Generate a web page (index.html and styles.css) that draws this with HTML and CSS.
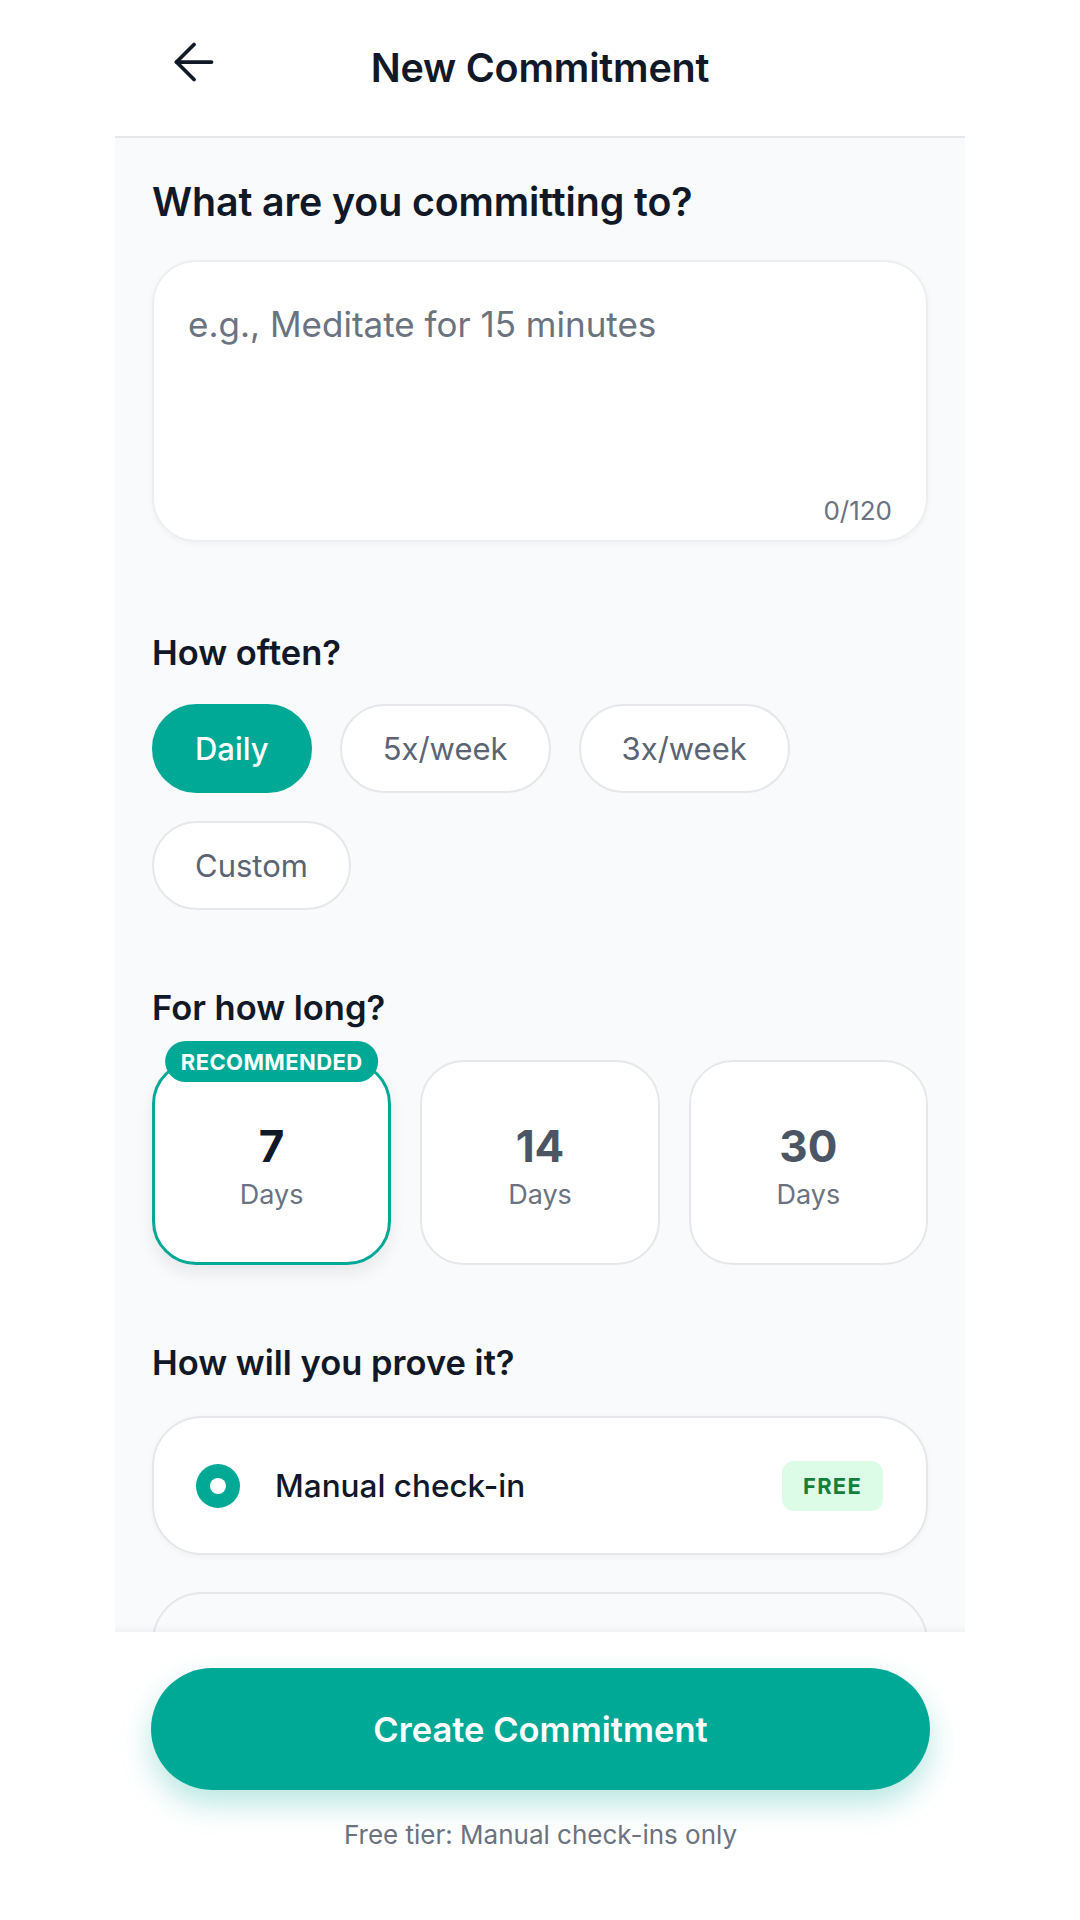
FILE: index.html
```html
<!DOCTYPE html>
<html lang="en">
<head>
<meta charset="utf-8">
<title>New Commitment</title>
<link rel="stylesheet" href="styles.css">
</head>
<body>
<div class="app">
  <header class="topbar">
    <button class="back" aria-label="Back">
      <svg viewBox="4 4 16 16" width="40" height="40" fill="none" stroke="currentColor" stroke-width="1.5" stroke-linecap="round" stroke-linejoin="round"><path d="M12 19l-7-7 7-7"/><path d="M19 12H5"/></svg>
    </button>
    <h1 class="title">New Commitment</h1>
  </header>

  <main class="content">
    <h2 class="q-main">What are you committing to?</h2>
    <div class="textarea">
      <span class="placeholder">e.g., Meditate for 15 minutes</span>
      <span class="counter">0/120</span>
    </div>

    <h3 class="q q-often">How often?</h3>
    <div class="chips">
      <span class="chip active">Daily</span>
      <span class="chip">5x/week</span>
      <span class="chip">3x/week</span>
      <span class="chip">Custom</span>
    </div>

    <h3 class="q q-long">For how long?</h3>
    <div class="durations">
      <div class="dur selected">
        <span class="badge">RECOMMENDED</span>
        <span class="num">7</span>
        <span class="unit">Days</span>
      </div>
      <div class="dur">
        <span class="num">14</span>
        <span class="unit">Days</span>
      </div>
      <div class="dur">
        <span class="num">30</span>
        <span class="unit">Days</span>
      </div>
    </div>

    <h3 class="q q-prove">How will you prove it?</h3>
    <div class="options">
      <div class="option">
        <span class="radio"></span>
        <span class="opt-label">Manual check-in</span>
        <span class="free">FREE</span>
      </div>
      <div class="option muted"></div>
    </div>
  </main>

  <footer class="footer">
    <button class="cta">Create Commitment</button>
    <p class="note">Free tier: Manual check-ins only</p>
  </footer>
</div>
</body>
</html>
```

FILE: styles.css
```css
* { box-sizing: border-box; }
html, body { margin: 0; padding: 0; background: #ffffff; }
body { font-family: Inter, "Noto Sans", sans-serif; color: #111827; }

.app {
  width: 850px;
  height: 1920px;
  margin: 0 auto;
  display: flex;
  flex-direction: column;
}

.topbar {
  height: 138px;
  flex: none;
  background: #fff;
  border-bottom: 2px solid #e5e7eb;
  display: flex;
  align-items: center;
  position: relative;
  padding-left: 59px;
}
.back {
  border: 0;
  background: none;
  padding: 0;
  width: 40px;
  height: 40px;
  color: #111827;
  display: flex;
  margin-top: -12px;
}
.title {
  position: absolute;
  left: 0;
  right: 0;
  top: 0;
  bottom: 0;
  margin: 0;
  display: flex;
  align-items: center;
  justify-content: center;
  font-size: 39.5px;
  font-weight: 600;
  letter-spacing: -0.2px;
  pointer-events: none;
}

.content {
  flex: 1;
  overflow: hidden;
  background: #f9fafb;
  padding: 40px 37px 0;
}

.q-main {
  margin: 0;
  font-size: 39.3px;
  line-height: 48px;
  font-weight: 600;
  letter-spacing: -0.1px;
}

.textarea {
  margin-top: 34px;
  height: 282px;
  background: #fff;
  border: 2px solid #eceef1;
  border-radius: 44px;
  box-shadow: 0 2px 6px rgba(17, 24, 39, 0.04);
  position: relative;
  padding: 42px 34px;
}
.placeholder {
  font-size: 35px;
  color: #6b7280;
  line-height: 40px;
}
.counter {
  position: absolute;
  right: 34px;
  bottom: 14px;
  font-size: 26px;
  color: #6b7280;
}

.q {
  margin: 0;
  font-size: 34.5px;
  line-height: 44px;
  font-weight: 600;
}
.q-often { margin-top: 89px; }

.chips {
  margin-top: 29px;
  display: flex;
  flex-wrap: wrap;
  gap: 28px;
  width: 700px;
}
.chip {
  height: 89px;
  padding: 0 41px;
  border-radius: 45px;
  background: #fff;
  border: 2px solid #e5e7eb;
  display: flex;
  align-items: center;
  font-size: 31px;
  color: #5b6472;
}
.chip.active {
  background: #00a896;
  border-color: #00a896;
  color: #fff;
  font-weight: 500;
}

.q-long { margin-top: 76px; }

.durations {
  margin-top: 30px;
  display: grid;
  grid-template-columns: repeat(3, 1fr);
  gap: 29px;
}
.dur {
  position: relative;
  height: 205px;
  background: #fff;
  border: 2px solid #e5e7eb;
  border-radius: 44px;
  display: flex;
  flex-direction: column;
  align-items: center;
  justify-content: center;
  padding-top: 6px;
}
.dur.selected {
  border: 3px solid #00a896;
  box-shadow: 0 8px 16px rgba(17, 24, 39, 0.08);
}
.badge {
  position: absolute;
  top: -22px;
  left: 50%;
  transform: translateX(-50%);
  height: 41px;
  padding: 0 16px;
  border-radius: 21px;
  background: #00a896;
  color: #fff;
  font-size: 22px;
  font-weight: 700;
  letter-spacing: 0.4px;
  display: flex;
  align-items: center;
  white-space: nowrap;
}
.num {
  font-size: 44px;
  line-height: 50px;
  font-weight: 700;
  color: #4b5563;
}
.dur.selected .num { color: #111827; }
.unit {
  font-size: 27px;
  line-height: 32px;
  color: #6b7280;
  margin-top: 8px;
}

.q-prove { margin-top: 76px; }

.options {
  margin-top: 31px;
  display: flex;
  flex-direction: column;
  gap: 37px;
}
.option {
  height: 139px;
  flex: none;
  background: #fff;
  border: 2px solid #e5e7eb;
  border-radius: 50px;
  display: flex;
  align-items: center;
  padding: 0 43px 0 42px;
  box-shadow: 0 2px 6px rgba(17, 24, 39, 0.04);
}
.option.muted {
  background: #f9fafb;
  box-shadow: none;
}
.radio {
  width: 44px;
  height: 44px;
  border-radius: 50%;
  background: #00a896;
  display: flex;
  align-items: center;
  justify-content: center;
  flex: none;
}
.radio::after {
  content: "";
  width: 16px;
  height: 16px;
  border-radius: 50%;
  background: #fff;
}
.opt-label {
  margin-left: 35px;
  flex: 1;
  font-size: 31.5px;
  font-weight: 500;
  color: #111827;
}
.free {
  height: 50px;
  padding: 0 21px;
  border-radius: 12px;
  background: #dcfce7;
  color: #15803d;
  font-size: 22px;
  font-weight: 700;
  letter-spacing: 1.2px;
  display: flex;
  align-items: center;
}

.footer {
  flex: none;
  height: 288px;
  background: #fff;
  position: relative;
  padding: 36px 35px 0 36px;
  display: flex;
  flex-direction: column;
  align-items: stretch;
}
.footer::before {
  content: "";
  position: absolute;
  left: 0;
  right: 0;
  top: -8px;
  height: 8px;
  background: linear-gradient(to top, rgba(17, 24, 39, 0.035), rgba(17, 24, 39, 0));
}
.cta {
  height: 122px;
  border: 0;
  border-radius: 61px;
  background: #00a896;
  color: #fff;
  font-family: Inter, "Noto Sans", sans-serif;
  font-size: 34.5px;
  font-weight: 600;
  box-shadow: 0 14px 30px rgba(0, 168, 150, 0.28);
}
.note {
  margin: 29px 0 0;
  text-align: center;
  font-size: 26px;
  color: #6b7280;
}
```
